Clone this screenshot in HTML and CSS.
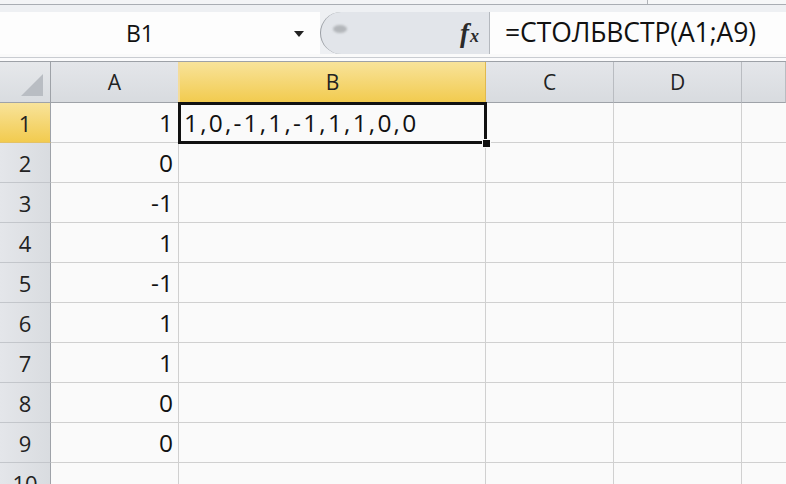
FILE: index.html
```html
<!DOCTYPE html>
<html>
    <head>
        <meta charset="utf-8">
        <title>СТОЛБВСТР</title>
        <link rel="stylesheet" href="styles.css">
    </head>
    <body>
        <div class="strip"><div class="strip-left"></div><div class="strip-right"></div></div>
        <div class="fbar">
            <div class="namebox">
                <span class="name">B1</span>
                <svg class="drop" width="10" height="6" viewBox="0 0 10 6"><path d="M0 0 H10 L5 6 Z" fill="#222"/></svg>
            </div>
            <div class="tools">
                <div class="grip"></div>
                <span class="fx">f<sub>x</sub></span>
            </div>
            <div class="formula">=СТОЛБВСТР(A1;A9)</div>
        </div>
        <div class="fbar-foot"></div>

        <div class="sheet">
            <div class="corner"><svg width="22" height="22" viewBox="0 0 22 22"><path d="M22 0 V22 H0 Z" fill="#b9bdc3"/></svg></div>
            <div class="colhdr">A</div>
            <div class="colhdr sel">B</div>
            <div class="colhdr">C</div>
            <div class="colhdr">D</div>
            <div class="colhdr last"></div>

            <div class="rowhdr sel">1</div>
            <div class="cell num">1</div>
            <div class="cell active">1,0,-1,1,-1,1,1,0,0<span class="handle"></span></div>
            <div class="cell"></div><div class="cell"></div><div class="cell last"></div>

            <div class="rowhdr">2</div>
            <div class="cell num">0</div>
            <div class="cell"></div><div class="cell"></div><div class="cell"></div><div class="cell last"></div>

            <div class="rowhdr">3</div>
            <div class="cell num">-1</div>
            <div class="cell"></div><div class="cell"></div><div class="cell"></div><div class="cell last"></div>

            <div class="rowhdr">4</div>
            <div class="cell num">1</div>
            <div class="cell"></div><div class="cell"></div><div class="cell"></div><div class="cell last"></div>

            <div class="rowhdr">5</div>
            <div class="cell num">-1</div>
            <div class="cell"></div><div class="cell"></div><div class="cell"></div><div class="cell last"></div>

            <div class="rowhdr">6</div>
            <div class="cell num">1</div>
            <div class="cell"></div><div class="cell"></div><div class="cell"></div><div class="cell last"></div>

            <div class="rowhdr">7</div>
            <div class="cell num">1</div>
            <div class="cell"></div><div class="cell"></div><div class="cell"></div><div class="cell last"></div>

            <div class="rowhdr">8</div>
            <div class="cell num">0</div>
            <div class="cell"></div><div class="cell"></div><div class="cell"></div><div class="cell last"></div>

            <div class="rowhdr">9</div>
            <div class="cell num">0</div>
            <div class="cell"></div><div class="cell"></div><div class="cell"></div><div class="cell last"></div>

            <div class="rowhdr">10</div>
            <div class="cell"></div>
            <div class="cell"></div><div class="cell"></div><div class="cell"></div><div class="cell last"></div>
        </div>
    </body>
</html>
```

FILE: styles.css
```css
body {
    margin: 0;
    padding: 0;
    background: #fafafa;
    font-family: "Open Sans", "Liberation Sans", sans-serif;
    color: #111;
    overflow: hidden;
    width: 786px;
    height: 484px;
}

.strip {
    display: flex;
    height: 4px;
    border-bottom: 1px solid #a9adb3;
}
.strip-left {
    width: 647px;
    background: #f3f4f6;
    border-right: 1px solid #b0b3b8;
}
.strip-right {
    flex: 1;
    background: #f6f7f8;
}

.fbar {
    display: flex;
    height: 49px;
    padding-top: 7px;
    box-sizing: border-box;
    background: #eef0f3;
}

.namebox {
    width: 320px;
    background: #fdfdfd;
    display: flex;
    align-items: center;
}
.name {
    flex: 1;
    text-align: center;
    font-size: 23px;
    padding-right: 14px;
}
.drop {
    margin-right: 16px;
    margin-top: 2px;
}

.tools {
    width: 168px;
    background: #e2e5ea;
    border-right: 1px solid #b4b8be;
    border-radius: 22px 0 0 22px;
    border-left: 1px solid #9a9ea4;
    display: flex;
    align-items: center;
    position: relative;
}
.grip {
    position: absolute;
    left: 12px; top: 13px;
    width: 14px; height: 8px;
    border-radius: 50%;
    background: #b3b6ba;
    filter: blur(1px);
}
.fx {
    margin-left: auto;
    margin-right: 10px;
    font-family: "Liberation Serif", serif;
    font-style: italic;
    font-weight: bold;
    font-size: 27px;
    color: #2a2a2a;
}
.fx sub {
    font-size: 18px;
    vertical-align: 0;
    margin-left: 1px;
}

.formula {
    flex: 1;
    background: #fdfdfd;
    font-size: 26.5px;
    padding-left: 15px;
    line-height: 41px;
    letter-spacing: -0.1px;
}

.fbar-foot {
    height: 3px;
    background: #fbfbfc;
    border-top: 1px solid #c9ccd1;
    border-bottom: 1px solid #9da1a7;
    margin-top: 3px;
}

.sheet {
    display: grid;
    grid-template-columns: 51px 128px 307px 128px 128px 1fr;
    grid-template-rows: 41px repeat(10, 40px);
}

.corner {
    background: linear-gradient(#e6e8eb, #d9dce0);
    border-right: 1px solid #9ea2a8;
    border-bottom: 1px solid #9ea2a8;
    display: flex;
    align-items: flex-end;
    justify-content: flex-end;
    padding: 0 7px 6px 0;
}

.colhdr {
    background: linear-gradient(#e4e6ea, #d8dbdf);
    border-right: 1px solid #b9bcc1;
    border-bottom: 1px solid #9ea2a8;
    text-align: center;
    font-size: 21px;
    line-height: 40px;
    color: #222;
}
.colhdr.sel {
    background: linear-gradient(#f8e39a, #f2cb4f);
    border-right-color: #e0b94e;
    border-left: 2px solid #f4dc9a;
    margin-left: -1px;
}

.rowhdr {
    background: linear-gradient(90deg, #e4e6ea, #d9dce0);
    border-right: 1px solid #9ea2a8;
    border-bottom: 1px solid #c3c6cb;
    text-align: center;
    font-size: 22px;
    line-height: 40px;
    color: #222;
}
.rowhdr.sel {
    background: linear-gradient(#f8e39a, #f2cb4f);
    border-bottom-color: #e4c265;
}

.cell {
    border-right: 1px solid #d0d0d0;
    border-bottom: 1px solid #d0d0d0;
    font-size: 24.5px;
    line-height: 40px;
    padding: 0 5px;
    white-space: nowrap;
}
.cell.last { border-right: none; }
.cell.num { text-align: right; }

.cell.active {
    position: relative;
    z-index: 1;
    padding-left: 5px;
    letter-spacing: 2.2px;
}
.cell.active::before {
    content: "";
    position: absolute;
    left: -1px; top: -1px; right: -2px; bottom: -2px;
    border: 3px solid #111;
}
.handle {
    position: absolute;
    right: -6px; bottom: -6px;
    width: 7px; height: 7px;
    background: #111;
    border: 1px solid #fafafa;
}
```
